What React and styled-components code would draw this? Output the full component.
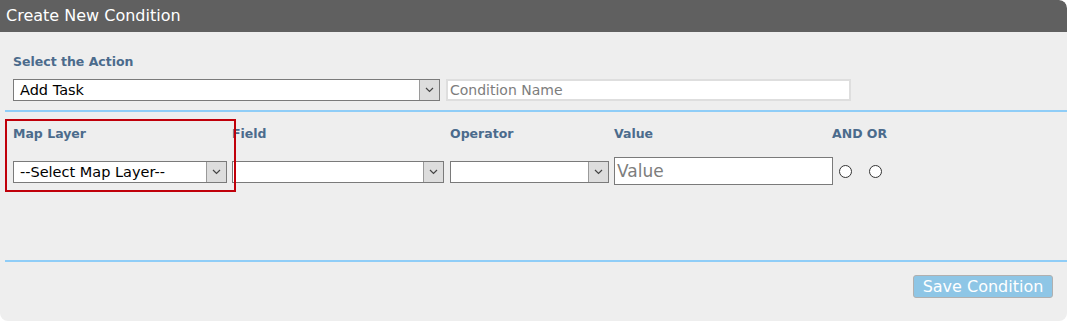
import React from 'react'
import styled, {createGlobalStyle} from 'styled-components'

const Global = createGlobalStyle`
  body {
    margin: 0;
    background: #ffffff;
    font-family: "DejaVu Sans", Verdana, sans-serif;
  }
`

const Panel = styled.div`
  width: 1067px;
  height: 321px;
  background: #eeeeee;
  border-radius: 0 8px 8px 8px;
  display: flex;
  flex-direction: column;
  overflow: hidden;
`

const Header = styled.div`
  height: 32px;
  background: #606060;
  border-radius: 0 8px 0 0;
  color: #ffffff;
  font-size: 16px;
  display: flex;
  align-items: center;
  padding-left: 6px;
  padding-bottom: 1px;
  box-sizing: border-box;
`

const Section = styled.div`
  padding: 22px 0 0 13px;
`

const Label = styled.div`
  font-size: 12.5px;
  font-weight: bold;
  color: #4b6b8c;
  box-sizing: border-box;
  height: ${p => p.h || 16}px;
  padding-top: ${p => p.pt || 0}px;
  line-height: 16px;
`

const Row = styled.div`
  display: flex;
  align-items: center;
  gap: ${p => p.gap || 0}px;
`

const SelectBox = styled.div`
  width: ${p => p.w}px;
  height: 22px;
  box-sizing: border-box;
  border: 1px solid #7a7a7a;
  background: #ffffff;
  display: flex;
  align-items: stretch;
  font-size: 14.5px;
  color: #000;
`

const SelectText = styled.div`
  flex: 1;
  padding-left: 6px;
  display: flex;
  align-items: center;
  white-space: nowrap;
  overflow: hidden;
`

const Arrow = styled.div`
  width: 19px;
  background: #dddddd;
  border-left: 1px solid #9a9a9a;
  display: flex;
  align-items: center;
  justify-content: center;
`

const TextInput = styled.div`
  width: ${p => p.w}px;
  height: ${p => p.h}px;
  box-sizing: border-box;
  border: ${p => p.light ? '2px solid #dedede' : '1px solid #7a7a7a'};
  background: #ffffff;
  color: #7d7d7d;
  font-size: ${p => p.fs}px;
  display: flex;
  align-items: center;
  padding-left: 2px;
`

const Divider = styled.div`
  margin-left: 5px;
  height: 2px;
  background: #8fcdf7;
`

const Spacer = styled.div`
  height: ${p => p.h}px;
`

const Grid = styled.div`
  position: relative;
  display: grid;
  grid-template-columns: 219px 218px 164px 218px auto;
  padding-left: 13px;
`

const Cell = styled.div`
  display: flex;
  flex-direction: column;
`

const Highlight = styled.div`
  position: absolute;
  left: 5px;
  top: 7px;
  width: 231px;
  height: 73px;
  box-sizing: border-box;
  border: 2px solid #c0000a;
  pointer-events: none;
`

const Radios = styled.div`
  height: 28px;
  padding-left: 7px;
  display: flex;
  align-items: center;
  gap: 17px;
`

const Radio = styled.span`
  width: 13px;
  height: 13px;
  box-sizing: border-box;
  border: 1px solid #333;
  border-radius: 50%;
  background: #fff;
  display: inline-block;
`

const Footer = styled.div`
  display: flex;
  justify-content: flex-end;
  padding: 13px 14px 0 0;
`

const Button = styled.div`
  width: 140px;
  height: 23px;
  box-sizing: border-box;
  background: #8ec6e6;
  border: 1px solid #b0b0b0;
  border-radius: 3px;
  color: #ffffff;
  font-size: 16px;
  display: flex;
  align-items: center;
  justify-content: center;
`

const Chevron = () => (
  <svg width="9" height="6" viewBox="0 0 9 6">
    <path d="M1 1 L4.5 4.5 L8 1" stroke="#444" strokeWidth="1.2" fill="none"/>
  </svg>
)

const Select = ({w, children}) => (
  <SelectBox w={w}>
    <SelectText>{children}</SelectText>
    <Arrow><Chevron/></Arrow>
  </SelectBox>
)

export default function App() {
  return (
    <Panel>
      <Global/>
      <Header>Create New Condition</Header>
      <Section>
        <Label h={25}>Select the Action</Label>
        <Row gap={6}>
          <Select w={427}>Add Task</Select>
          <TextInput w={405} h={22} fs={14} light>Condition Name</TextInput>
        </Row>
      </Section>
      <Spacer h={9}/>
      <Divider/>
      <Grid>
        <Highlight/>
        <Cell>
          <Label h={49} pt={14}>Map Layer</Label>
          <Select w={214}>--Select Map Layer--</Select>
        </Cell>
        <Cell>
          <Label h={49} pt={14}>Field</Label>
          <Select w={212}/>
        </Cell>
        <Cell>
          <Label h={49} pt={14}>Operator</Label>
          <Select w={159}/>
        </Cell>
        <Cell>
          <Label h={45} pt={14}>Value</Label>
          <TextInput w={219} h={28} fs={17}>Value</TextInput>
        </Cell>
        <Cell>
          <Label h={45} pt={14}>AND OR</Label>
          <Radios>
            <Radio/>
            <Radio/>
          </Radios>
        </Cell>
      </Grid>
      <Spacer h={75}/>
      <Divider/>
      <Footer>
        <Button>Save Condition</Button>
      </Footer>
    </Panel>
  )
}
